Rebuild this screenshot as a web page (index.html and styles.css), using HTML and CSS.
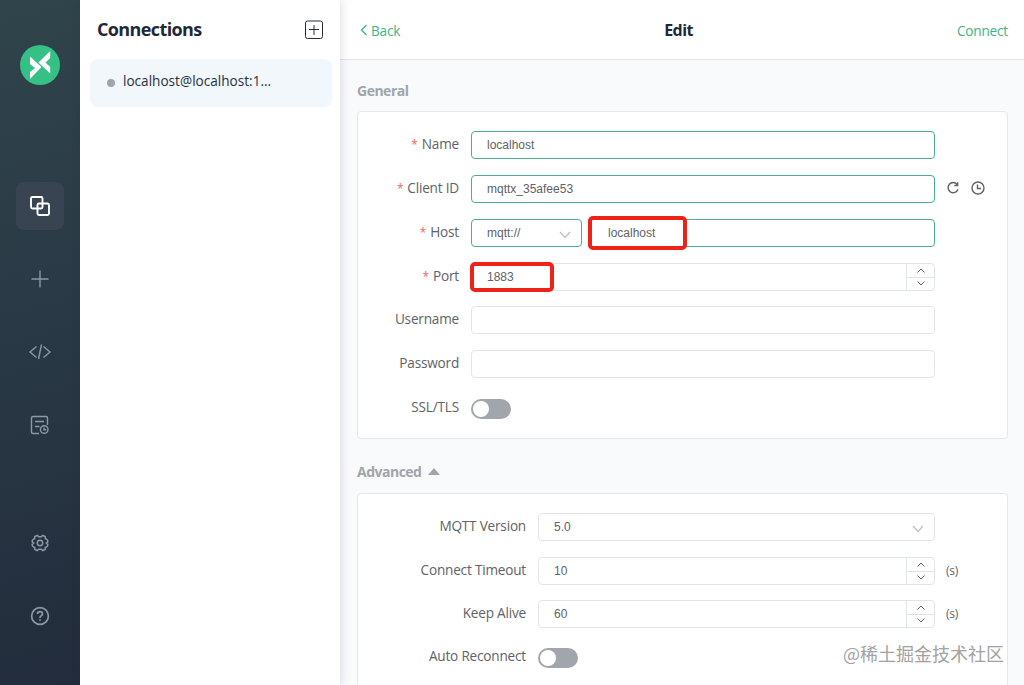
FILE: index.html
```html
<!DOCTYPE html>
<html lang="en">
<head>
<meta charset="utf-8">
<title>MQTTX - Edit</title>
<link rel="stylesheet" href="styles.css">
</head>
<body>
<div class="app">
  <nav class="rail">
    <svg class="logo" viewBox="0 0 40 40"><circle cx="20" cy="20" r="20" fill="#35c086"/><path d="M10 11.500L21.500 22L10 34V27L15 23L10 19Z M30.200 6V13L25.500 17.500L30.200 22V28.500L18.500 17.500Z" fill="#fff"/></svg>
    <div class="rail-top">
      <a class="tile active"><svg width="24" height="24" viewBox="0 0 24 24"><rect x="3" y="3" width="11.500" height="11.500" rx="1.500"/><rect x="9.500" y="9.500" width="11.500" height="11.500" rx="1.500"/></svg></a>
      <a class="tile"><svg width="24" height="24" viewBox="0 0 24 24"><path d="M12 3.500V20.500M3.500 12H20.500"/></svg></a>
      <a class="tile"><svg width="24" height="24" viewBox="0 0 24 24"><path d="M8.500 6.500L2 12L8.500 17.500M15.500 6.500L22 12L15.500 17.500M13.500 4.500L10.500 19"/></svg></a>
      <a class="tile"><svg width="24" height="24" viewBox="0 0 24 24"><path d="M19.500 12V5Q19.500 3.500 18 3.500H5Q3.500 3.500 3.500 5V19Q3.500 20.500 5 20.500H11M7 8.500H16M7 13.500H11.500"/><circle cx="16.200" cy="16.500" r="3.800"/><path d="M16 14.500V16.800H18.200"/></svg></a>
    </div>
    <div class="rail-bottom">
      <a class="tile gear"><svg width="24" height="24" viewBox="0 0 24 24"><path d="M9.300 4.300L10.600 5.700H13.400L14.700 4.300L17.200 5.500V7.400L18.600 8.300L19.700 9.300V11L18.300 12L19.700 13.200V14.700L18.600 15.900L17.200 16.500V18.500L14.700 19.700L13.400 18.300H10.600L9.300 19.700L6.800 18.500V16.500L5.400 15.900L4.300 14.700V13.200L5.700 12L4.300 11V9.300L5.400 8.300L6.800 7.400V5.500Z"/><circle cx="12" cy="12" r="2.700"/></svg></a>
      <a class="tile help"><svg width="24" height="24" viewBox="0 0 24 24"><circle cx="12" cy="12" r="8.400"/><path d="M9.500 10Q9.500 7.600 12 7.600Q14.500 7.600 14.500 9.900Q14.500 11 13.200 11.800Q12 12.500 12 14M12 15.200V16.800"/></svg></a>
    </div>
  </nav>

  <aside class="connections">
    <header class="conn-head">
      <h1>Connections</h1>
      <svg width="20" height="20" viewBox="0 0 20 20"><rect x="1.500" y="1" width="17" height="17.500" rx="2"/><path d="M10 5V15M5 9.500H15"/></svg>
    </header>
    <div class="conn-item"><i class="dot"></i><span>localhost@localhost:1...</span></div>
  </aside>

  <main class="editor">
    <header class="topbar">
      <a class="back"><svg width="8" height="12" viewBox="0 0 8 12"><path d="M6.500 1L1.500 6L6.500 11"/></svg><span>Back</span></a>
      <h2>Edit</h2>
      <a class="connect">Connect</a>
    </header>

    <h3 class="section">General</h3>
    <section class="card general">
      <div class="row"><label class="req">Name</label><div class="input valid">localhost</div></div>
      <div class="row"><label class="req">Client ID</label><div class="input valid">mqttx_35afee53</div>
        <div class="actions">
          <svg width="14" height="14" viewBox="0 0 14 14"><path d="M11.200 3.500A5.100 5.100 0 1 0 12 8.300M8.300 4.500H11.700V1.200"/></svg>
          <svg width="14" height="14" viewBox="0 0 14 14"><circle cx="7" cy="7" r="6"/><path d="M6.500 3.500V7.500H10"/></svg>
        </div>
      </div>
      <div class="row"><label class="req">Host</label>
        <div class="host">
          <div class="input valid select">mqtt://<svg class="chev" width="12" height="8" viewBox="0 0 12 8"><path d="M1 1L6 6.500L11 1"/></svg></div>
          <div class="input valid address">localhost<i class="mark mark-host"></i></div>
        </div>
      </div>
      <div class="row"><label class="req">Port</label>
        <div class="input number">1883<div class="stepper"><span><svg width="8" height="5" viewBox="0 0 8 5"><path d="M.5 4.500L4 1L7.500 4.500"/></svg></span><span><svg width="8" height="5" viewBox="0 0 8 5"><path d="M.5.5L4 4L7.500.5"/></svg></span></div><i class="mark mark-port"></i></div>
      </div>
      <div class="row tight"><label>Username</label><div class="input"></div></div>
      <div class="row"><label>Password</label><div class="input"></div></div>
      <div class="row"><label>SSL/TLS</label><div class="switch"></div></div>
    </section>

    <h3 class="section advanced-title">Advanced<i class="caret"></i></h3>
    <section class="card advanced">
      <div class="row"><label>MQTT Version</label><div class="input select">5.0<svg class="chev" width="12" height="8" viewBox="0 0 12 8"><path d="M1 1L6 6.500L11 1"/></svg></div></div>
      <div class="row"><label>Connect Timeout</label>
        <div class="input number">10<div class="stepper"><span><svg width="8" height="5" viewBox="0 0 8 5"><path d="M.5 4.500L4 1L7.500 4.500"/></svg></span><span><svg width="8" height="5" viewBox="0 0 8 5"><path d="M.5.5L4 4L7.500.5"/></svg></span></div></div>
        <span class="unit">(s)</span>
      </div>
      <div class="row tight"><label>Keep Alive</label>
        <div class="input number">60<div class="stepper"><span><svg width="8" height="5" viewBox="0 0 8 5"><path d="M.5 4.500L4 1L7.500 4.500"/></svg></span><span><svg width="8" height="5" viewBox="0 0 8 5"><path d="M.5.5L4 4L7.500.5"/></svg></span></div></div>
        <span class="unit">(s)</span>
      </div>
      <div class="row tight"><label>Auto Reconnect</label><div class="switch"></div></div>
    </section>
  </main>
  <div class="watermark">@稀土掘金技术社区</div>
</div>
</body>
</html>
```
FILE: styles.css
```css
* { box-sizing: border-box; }
body { margin: 0; font-family: "Open Sans", "Noto Sans", sans-serif; font-size: 13.6px; letter-spacing: -.2px; color: #606266; }
h1, h2, h3 { margin: 0; }
svg { display: block; fill: none; stroke: currentColor; flex: none; }
.app { display: flex; position: relative; width: 1024px; height: 685px; overflow: hidden; background: #fff; }

.rail { width: 80px; padding: 45px 0; display: flex; flex-direction: column; align-items: center; background: linear-gradient(165deg, #30444b 0%, #293845 50%, #222c3c 100%); color: #8c99a5; }
.logo { width: 40px; height: 40px; stroke: none; }
.rail-top { margin-top: 97px; display: grid; gap: 25px; }
.rail-bottom { margin-top: auto; display: grid; gap: 25px; }
.tile { width: 48px; height: 48px; border-radius: 8px; display: grid; place-items: center; }
.tile svg { stroke-width: 1.4; }
.tile.active { background: #384451; color: #fff; }
.tile.active svg { stroke-width: 1.9; }
.tile.gear svg { stroke-width: 1.5; }
.tile.help svg { stroke-width: 1.7; }

.connections { width: 260px; background: #fff; z-index: 1; box-shadow: 1px 0 9px rgba(40, 50, 70, .16); }
.conn-head { height: 59px; padding: 0 16px 0 17px; display: flex; align-items: center; justify-content: space-between; color: #262e3d; }
.conn-head h1 { font-size: 18px; font-weight: 700; letter-spacing: -.62px; color: #1f2936; padding-bottom: 1px; }
.conn-item { margin: 0 8px 0 10px; height: 48px; padding: 0 17px; border-radius: 8px; display: flex; align-items: center; gap: 8px; background: #f2f7fc; color: #28303f; }
.conn-item span { font-weight: 500; font-size: 13.6px; letter-spacing: 0; line-height: 20px; padding-bottom: 4px; white-space: nowrap; }
.dot { width: 8px; height: 8px; border-radius: 50%; background: #9fa4ad; margin-bottom: 1px; }

.editor { flex: 1; min-width: 0; background: #f9fafc; }
.topbar { height: 60px; padding: 1px 16px 0 20px; display: flex; justify-content: space-between; align-items: center; background: #fff; border-bottom: 1px solid #e2e5e9; color: #3eb584; }
.topbar h2 { font-size: 16px; font-weight: 700; letter-spacing: -.5px; color: #202936; }
.back { display: flex; align-items: center; gap: 3px; }
.back svg { stroke-width: 1.3; }
.connect { text-align: right; }

.section { margin-left: 17px; height: 51px; padding-top: 21px; font-size: 14px; line-height: 20px; font-weight: 700; letter-spacing: -.5px; color: #a0a5aa; }
.advanced-title { height: 54px; padding-top: 23px; display: flex; gap: 7px; }
.caret { margin-top: 6px; width: 0; height: 0; border: 6px solid transparent; border-top: 0; border-bottom: 7px solid #a0a5aa; }
.card { margin: 0 16px 0 17px; padding: 19px 0; background: #fff; border: 1px solid #e4e7ea; border-radius: 4px; }
.general { height: 328px; --label: 101px; --field: 464px; }
.advanced { height: 240px; --label: 168px; --field: 397px; }
.row { height: 28px; margin-bottom: 16px; display: grid; grid-template: 28px / var(--label) var(--field) 1fr; column-gap: 12px; align-items: center; }
.row:has(+ .tight) { margin-bottom: 15px; }
.row label { text-align: right; line-height: 26px; padding-bottom: 2px; }
.req::before { content: "*"; font-size: 12px; color: #ee6655; margin-right: 4px; }
.input { position: relative; height: 28px; padding: 0 15px; border: 1px solid #e2e5e8; border-radius: 4px; background: #fff; font: 12px/26px "Liberation Sans", Arial, sans-serif; letter-spacing: 0; color: #606266; }
.input.valid { border-color: #4cae8c; }
.host { display: grid; grid-template-columns: 111px 1fr; gap: 6px; }
.select { display: flex; justify-content: space-between; padding-right: 10px; }
.chev { margin-top: 11px; color: #bfc3c9; stroke-width: 1.4; }
.address { padding-left: 19px; }
.number { display: flex; justify-content: space-between; padding-right: 0; }
.stepper { width: 28px; height: 26px; border-left: 1px solid #e2e5e8; display: grid; grid-template-rows: 14px 11px; color: #606266; }
.stepper span { display: grid; place-items: center; }
.stepper span:first-child { border-bottom: 1px solid #e2e5e8; }
.mark { position: absolute; border: 4px solid #ee2218; border-radius: 5px; }
.mark-host { left: -1px; top: -4px; width: 99px; height: 34px; }
.mark-port { left: -2px; top: -2px; width: 84px; height: 30px; }
.actions { display: flex; gap: 11px; margin-left: -1px; padding-bottom: 3px; }
.actions svg { stroke-width: 1.4; }
.switch { width: 40px; height: 20px; padding: 2px; border-radius: 10px; background: #a1a6ac; margin-top: 2px; }
.switch::before { content: ""; display: block; width: 16px; height: 16px; border-radius: 50%; background: #fff; }
.unit { font-size: 12px; margin-left: -1px; padding-bottom: 2px; }
.watermark { position: absolute; z-index: 2; right: 20px; bottom: 18px; font: 18px/28px "Noto Sans CJK SC", sans-serif; letter-spacing: 0; color: #a2a2a2; white-space: nowrap; }
```
